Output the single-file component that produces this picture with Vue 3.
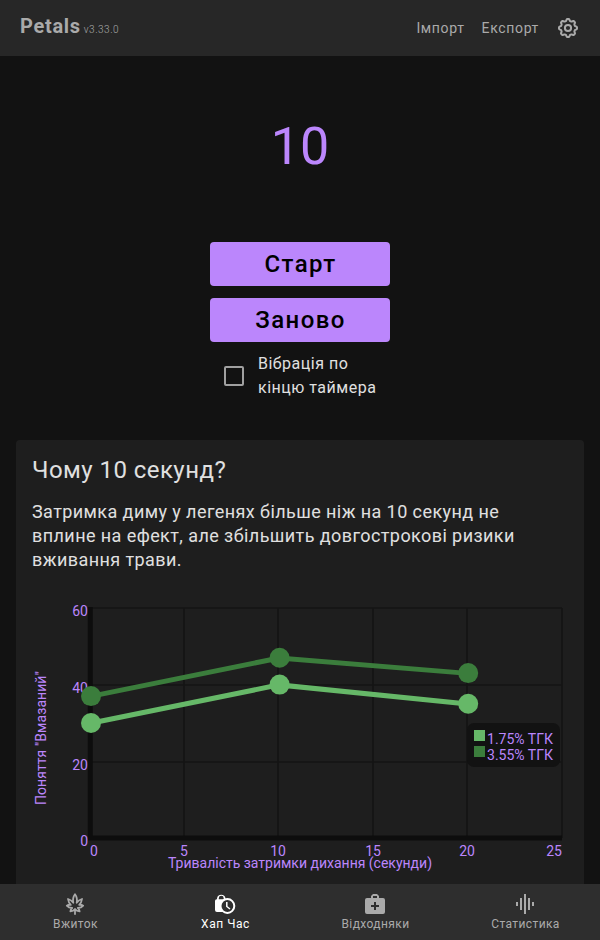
<script setup>
import { ref } from 'vue'

const vibrate = ref(false)

const toX = (v) => 90.5 + v * 18.86
const toY = (v) => 838.5 - v * 3.84

const series = [
  { name: '3.55% ТГК', color: '#3b7d3c', points: [[0, 37], [10, 47], [20, 43]] },
  { name: '1.75% ТГК', color: '#66b868', points: [[0, 30], [10, 40], [20, 35]] },
]
const legend = [
  { name: '1.75% ТГК', color: '#66b868', y: 730, textY: 744 },
  { name: '3.55% ТГК', color: '#3b7d3c', y: 746, textY: 760 },
]
const line = (points) => points.map(([x, y]) => `${toX(x)},${toY(y)}`).join(' ')

const gridX = [184, 278, 373, 467, 562]
const gridY = [608, 685, 762]
const xTicks = [
  { label: '0', x: 94 }, { label: '5', x: 184 }, { label: '10', x: 278 },
  { label: '15', x: 373 }, { label: '20', x: 467 }, { label: '25', x: 554 },
]
const yTicks = [
  { label: '60', y: 616 }, { label: '40', y: 693 }, { label: '20', y: 770 }, { label: '0', y: 846 },
]

// Outline of the settings gear: eight soft teeth around the centre
const gear = (() => {
  const pts = []
  for (let i = 0; i < 96; i++) {
    const a = (i / 96) * Math.PI * 2
    const c = Math.cos(8 * a)
    const r = 8.1 + 0.95 * Math.tanh(2 * c)
    pts.push(`${(12 + r * Math.cos(a)).toFixed(2)} ${(12 + r * Math.sin(a)).toFixed(2)}`)
  }
  return `M${pts.join('L')}Z`
})()
</script>

<template>
  <div class="app">
    <header class="toolbar">
      <div class="brand"><span class="name">Petals</span><span class="version">v3.33.0</span></div>
      <nav class="actions">
        <span class="import">Імпорт</span>
        <span class="export">Експорт</span>
        <svg class="gear" viewBox="0 0 24 24" width="24" height="24" fill="none" stroke="currentColor" stroke-width="2">
          <path :d="gear" stroke-linejoin="round" />
          <circle cx="12" cy="12" r="3.1" />
        </svg>
      </nav>
    </header>

    <main class="content">
      <div class="timer">10</div>
      <div class="controls">
        <button class="btn start">Старт</button>
        <button class="btn reset">Заново</button>
        <label class="vibration">
          <input v-model="vibrate" type="checkbox" class="check" />
          <span>Вібрація по<br />кінцю таймера</span>
        </label>
      </div>

      <section class="card">
        <h2>Чому 10 секунд?</h2>
        <p>Затримка диму у легенях більше ніж на 10 секунд не<br />вплине на ефект, але збільшить довгострокові ризики<br />вживання трави.</p>
        <svg class="chart" viewBox="16 590 568 294" width="568" height="294">
          <g stroke="#151515" stroke-width="1.7">
            <line v-for="x in gridX" :key="'x' + x" :x1="x" :x2="x" y1="608" y2="838" />
            <line v-for="y in gridY" :key="'y' + y" x1="90" x2="562" :y1="y" :y2="y" />
          </g>
          <path d="M90.3 607V838H562" fill="none" stroke="#0d0d0d" stroke-width="5" />
          <g class="labels">
            <text v-for="t in yTicks" :key="'yl' + t.label" x="88" :y="t.y" text-anchor="end">{{ t.label }}</text>
            <text v-for="t in xTicks" :key="'xl' + t.label" :x="t.x" y="856" text-anchor="middle">{{ t.label }}</text>
            <text x="168" y="868" textLength="264">Тривалість затримки дихання (секунди)</text>
            <text transform="translate(46 805) rotate(-90)" textLength="134">Поняття "Вмазаний"</text>
          </g>
          <g v-for="s in series" :key="s.name">
            <polyline :points="line(s.points)" fill="none" :stroke="s.color" stroke-width="5" />
            <circle v-for="p in s.points" :key="p[0]" :cx="toX(p[0]) + 0.5" :cy="toY(p[1]) - 0.3" r="10" :fill="s.color" />
          </g>
          <rect x="467" y="723" width="93" height="44" rx="7" fill="#121212" />
          <g v-for="l in legend" :key="l.name" class="labels">
            <rect x="474" :y="l.y" width="11" height="11" :fill="l.color" />
            <text x="487" :y="l.textY" textLength="66">{{ l.name }}</text>
          </g>
        </svg>
      </section>
    </main>

    <footer class="tabs">
      <div class="tab">
        <svg viewBox="0 0 24 24" width="24" height="24" fill="none" stroke="currentColor" stroke-width="1.8" stroke-linejoin="round">
          <path d="M12 2.3C9.9 5.2 9.7 8.2 10.3 10.8C8.8 8.8 7.2 7.7 5 7C5.3 9.4 6.3 11.4 7.8 12.8C6.3 12.6 5 12.9 3.8 13.7C5.2 15.3 7 16 9.2 15.9C8.1 16.7 7.5 17.7 7.4 19.4C9.3 19.3 10.9 18.5 12 17C13.1 18.5 14.7 19.3 16.6 19.4C16.5 17.7 15.9 16.7 14.8 15.9C17 16 18.8 15.3 20.2 13.7C19 12.9 17.7 12.6 16.2 12.8C17.7 11.4 18.7 9.4 19 7C16.8 7.7 15.2 8.8 13.7 10.8C14.3 8.2 14.1 5.2 12 2.3ZM12 17V22.7" />
        </svg>
        <span>Вжиток</span>
      </div>
      <div class="tab active">
        <svg viewBox="0 0 24 24" width="24" height="24">
          <path fill="currentColor" d="M2 9Q2 7.3 3.7 7.3H4V6.5A4.3 4.3 0 0 1 12.5 6.5V7.3H16V20H4Q2 20 2 18ZM5.8 7.3H10.7V6.3A2.4 2.4 0 0 0 5.8 6.3Z" fill-rule="evenodd" />
          <circle cx="14.4" cy="14" r="6.9" fill="#2e2e2e" stroke="currentColor" stroke-width="2" />
          <path d="M13.8 10V14.5L17 17" fill="none" stroke="currentColor" stroke-width="1.5" />
        </svg>
        <span>Хап Час</span>
      </div>
      <div class="tab">
        <svg viewBox="0 0 24 24" width="24" height="24" fill="currentColor">
          <path fill-rule="evenodd" d="M10 2H14L16 4V6H20A2 2 0 0 1 22 8V20A2 2 0 0 1 20 22H4A2 2 0 0 1 2 20V8A2 2 0 0 1 4 6H8V4ZM10 4V6H14V4ZM11 10V13H8V15H11V18H13V15H16V13H13V10Z" />
        </svg>
        <span>Відходняки</span>
      </div>
      <div class="tab">
        <svg viewBox="0 0 24 24" width="24" height="24" fill="currentColor">
          <path d="M3 10H5V14H3ZM7 6H9V18H7ZM11 2H13V22H11ZM15 6H17V18H15ZM19 10H21V14H19Z" />
        </svg>
        <span>Статистика</span>
      </div>
    </footer>
  </div>
</template>

<style>
body {
  background: #121212;
}
</style>

<style scoped>
.app {
  height: 940px;
  overflow: hidden;
  display: flex;
  flex-direction: column;
  background: #121212;
  color: #e0e0e0;
  font-family: Roboto, "Noto Sans", sans-serif;
}
.toolbar {
  height: 56px;
  flex: none;
  box-sizing: border-box;
  padding: 0 20px;
  display: flex;
  justify-content: space-between;
  align-items: center;
  background: #272727;
  color: #aaa;
}
.brand {
  display: flex;
  align-items: baseline;
  gap: 3px;
  padding-bottom: 4px;
}
.name {
  font-size: 20px;
  font-weight: 700;
  letter-spacing: 0.7px;
}
.version {
  font-size: 10px;
  font-weight: 300;
  letter-spacing: 0.5px;
}
.actions {
  display: flex;
  align-items: center;
  gap: 17px;
  font-size: 14px;
  letter-spacing: 0.65px;
}
.content {
  flex: 1;
  min-height: 0;
  overflow: hidden;
  display: flex;
  flex-direction: column;
}
.timer {
  height: 186px;
  box-sizing: border-box;
  padding-top: 61px;
  line-height: 60px;
  font-size: 52px;
  text-align: center;
  color: #bb86fc;
}
.controls {
  width: 180px;
  margin: 0 auto;
  display: flex;
  flex-direction: column;
  gap: 12px;
}
.btn {
  height: 44px;
  border: 0;
  border-radius: 4px;
  padding: 0 0 0 1px;
  background: #bb86fc;
  color: #000;
  font: 500 24px/44px Roboto, "Noto Sans", sans-serif;
  letter-spacing: 1.4px;
}
.vibration {
  display: flex;
  align-items: center;
  gap: 14px;
  margin-top: -2px;
  padding-left: 14px;
  font-size: 16px;
  line-height: 24px;
  letter-spacing: 0.5px;
  white-space: nowrap;
}
.check {
  appearance: none;
  width: 20px;
  height: 20px;
  margin: 0;
  border: 2px solid #a0a0a0;
  border-radius: 2px;
}
.card {
  flex: 1;
  margin: 40px 16px 0;
  border-radius: 4px 4px 0 0;
  background: #1e1e1e;
  overflow: hidden;
}
h2 {
  margin: 14px 16px 0;
  font-size: 24px;
  line-height: 32px;
  font-weight: 400;
  letter-spacing: 0.45px;
}
p {
  margin: 14px 16px 0;
  font-size: 18px;
  line-height: 24px;
  letter-spacing: 0.42px;
  white-space: nowrap;
}
.chart {
  display: block;
  margin-top: 18px;
}
.labels {
  font-size: 14px;
  fill: #bb86fc;
}
.tabs {
  height: 56px;
  flex: none;
  display: grid;
  grid-template-columns: repeat(4, 1fr);
  background: #2e2e2e;
  color: #aaa;
}
.tab {
  display: flex;
  flex-direction: column;
  align-items: center;
  padding-top: 8px;
  font-size: 12px;
  line-height: 16px;
  letter-spacing: 0.4px;
}
.tab span {
  padding-left: 1px;
}
.active {
  color: #fff;
  letter-spacing: 0.55px;
}
</style>
